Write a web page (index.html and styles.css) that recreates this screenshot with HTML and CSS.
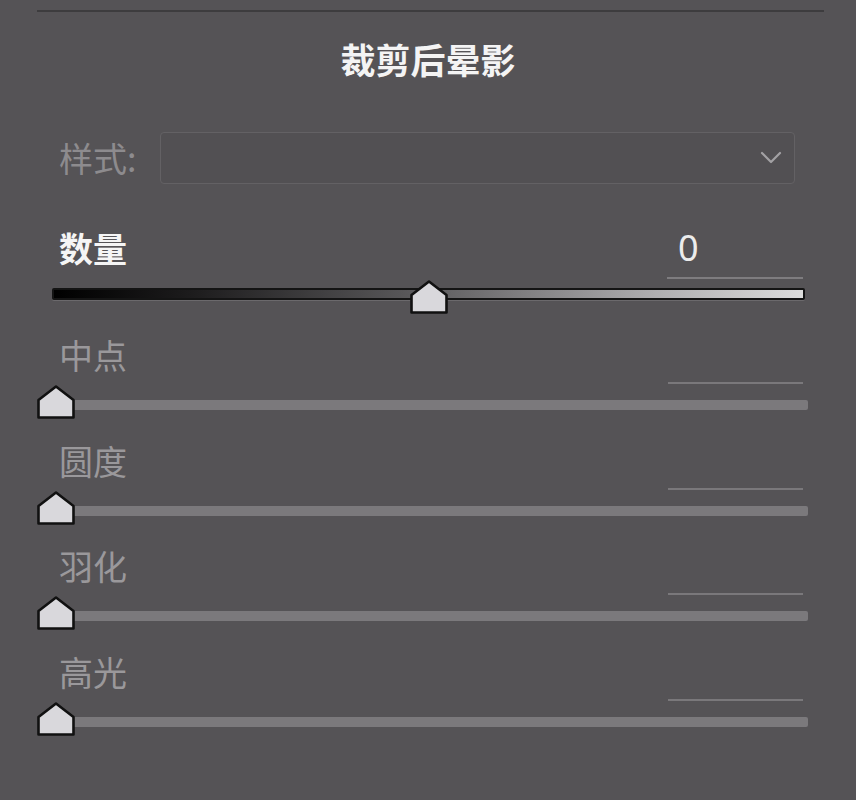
FILE: index.html
```html
<!DOCTYPE html>
<html lang="zh-CN">
<head>
<meta charset="utf-8">
<title>裁剪后晕影</title>
<link rel="stylesheet" href="styles.css">
</head>
<body>
<div class="panel">
  <div class="topline"></div>
  <h1 class="title">裁剪后晕影</h1>

  <div class="style-row">
    <span class="style-label">样式:</span>
    <div class="select">
      <svg class="chev" width="22" height="14" viewBox="0 0 22 14"><polyline points="2,2 11,11 20,2" fill="none" stroke="#a3a1a4" stroke-width="2.2" stroke-linecap="round" stroke-linejoin="round"/></svg>
    </div>
  </div>

  <div class="amount-head">
    <span class="amount-label">数量</span>
    <span class="amount-value">0</span>
  </div>
  <div class="grad-wrap">
    <div class="grad-track"></div>
    <svg class="thumb thumb-main" width="38" height="34" viewBox="0 0 38 34"><polygon points="19,1.5 1.5,15 1.5,32.5 36.5,32.5 36.5,15" fill="#d9d8dc" stroke="#111" stroke-width="2.6" stroke-linejoin="round"/></svg>
  </div>

  <div class="srow">
    <div class="srow-head"><span class="slabel">中点</span><span class="svalue"></span></div>
    <div class="strack-wrap"><div class="strack"></div><svg class="thumb thumb-small" width="38" height="34" viewBox="0 0 38 34"><polygon points="19,1.5 1.5,15 1.5,32.5 36.5,32.5 36.5,15" fill="#d9d8dc" stroke="#111" stroke-width="2.6" stroke-linejoin="round"/></svg></div>
  </div>
  <div class="srow">
    <div class="srow-head"><span class="slabel">圆度</span><span class="svalue"></span></div>
    <div class="strack-wrap"><div class="strack"></div><svg class="thumb thumb-small" width="38" height="34" viewBox="0 0 38 34"><polygon points="19,1.5 1.5,15 1.5,32.5 36.5,32.5 36.5,15" fill="#d9d8dc" stroke="#111" stroke-width="2.6" stroke-linejoin="round"/></svg></div>
  </div>
  <div class="srow">
    <div class="srow-head"><span class="slabel">羽化</span><span class="svalue"></span></div>
    <div class="strack-wrap"><div class="strack"></div><svg class="thumb thumb-small" width="38" height="34" viewBox="0 0 38 34"><polygon points="19,1.5 1.5,15 1.5,32.5 36.5,32.5 36.5,15" fill="#d9d8dc" stroke="#111" stroke-width="2.6" stroke-linejoin="round"/></svg></div>
  </div>
  <div class="srow">
    <div class="srow-head"><span class="slabel">高光</span><span class="svalue"></span></div>
    <div class="strack-wrap"><div class="strack"></div><svg class="thumb thumb-small" width="38" height="34" viewBox="0 0 38 34"><polygon points="19,1.5 1.5,15 1.5,32.5 36.5,32.5 36.5,15" fill="#d9d8dc" stroke="#111" stroke-width="2.6" stroke-linejoin="round"/></svg></div>
  </div>
</div>
</body>
</html>
```

FILE: styles.css
```css
* { box-sizing: border-box; }
html, body {
  margin: 0;
  padding: 0;
  background: #555356;
}
body {
  font-family: "Noto Sans CJK SC", "Noto Sans", sans-serif;
  width: 856px;
  height: 800px;
  overflow: hidden;
}
.panel {
  width: 856px;
  height: 800px;
  display: flex;
  flex-direction: column;
}
.topline {
  margin-top: 10px;
  margin-left: 37px;
  width: 787px;
  height: 2px;
  background: #3d3c3e;
}
.title {
  margin: 27px 0 0 0;
  height: 40px;
  line-height: 40px;
  font-size: 35px;
  font-weight: 700;
  color: #f4f4f4;
  text-align: center;
}
.style-row {
  margin-top: 53px;
  height: 52px;
  display: flex;
  align-items: center;
}
.style-label {
  margin-left: 59px;
  width: 101px;
  font-size: 34px;
  line-height: 40px;
  color: #8d8b8e;
}
.select {
  width: 635px;
  height: 52px;
  border: 1.5px solid #636164;
  border-radius: 4px;
  background: #525053;
  display: flex;
  align-items: center;
  justify-content: flex-end;
  padding-right: 12px;
}
.chev { display: block; }
.amount-head {
  margin-top: 44px;
  height: 51px;
  display: flex;
  justify-content: space-between;
  align-items: flex-start;
  padding: 0 53px 0 59px;
}
.amount-label {
  line-height: 40px;
  font-size: 34px;
  font-weight: 700;
  color: #f5f5f5;
}
.amount-value {
  width: 136px;
  height: 51px;
  border-bottom: 2px solid #7e7c7f;
  font-family: "Noto Sans", sans-serif;
  font-size: 36px;
  line-height: 40px;
  padding-left: 11px;
  color: #ececec;
}
.grad-wrap {
  position: relative;
  margin-top: 1px;
  margin-left: 52px;
  width: 753px;
  height: 34px;
  padding-top: 8px;
}
.grad-track {
  height: 12px;
  border: 2px solid #141414;
  border-radius: 2px;
  background: linear-gradient(to right, #000 0%, #1c1b1c 18%, #5e5d5f 50%, #aeadaf 80%, #dcdcdc 100%);
  box-shadow: 0 1px 0 #6b696c;
}
.thumb {
  position: absolute;
  top: 0;
  display: block;
}
.thumb-main { left: 358px; }
.srow {
  margin-top: 20px;
  height: 85px;
  margin-bottom: 0.7px;
}
.srow-head {
  height: 50px;
  display: flex;
  justify-content: space-between;
  align-items: flex-start;
  padding: 1px 53px 0 59px;
}
.slabel {
  font-size: 34px;
  line-height: 40px;
  color: #9a989b;
}
.svalue {
  width: 135px;
  height: 49px;
  border-bottom: 2px solid #7a787b;
}
.strack-wrap {
  position: relative;
  margin-top: 1px;
  height: 34px;
  padding-top: 15px;
}
.strack {
  margin-left: 56px;
  width: 752px;
  height: 10px;
  background: #7b797c;
  border-radius: 2px;
}
.thumb-small { left: 37px; }
```
